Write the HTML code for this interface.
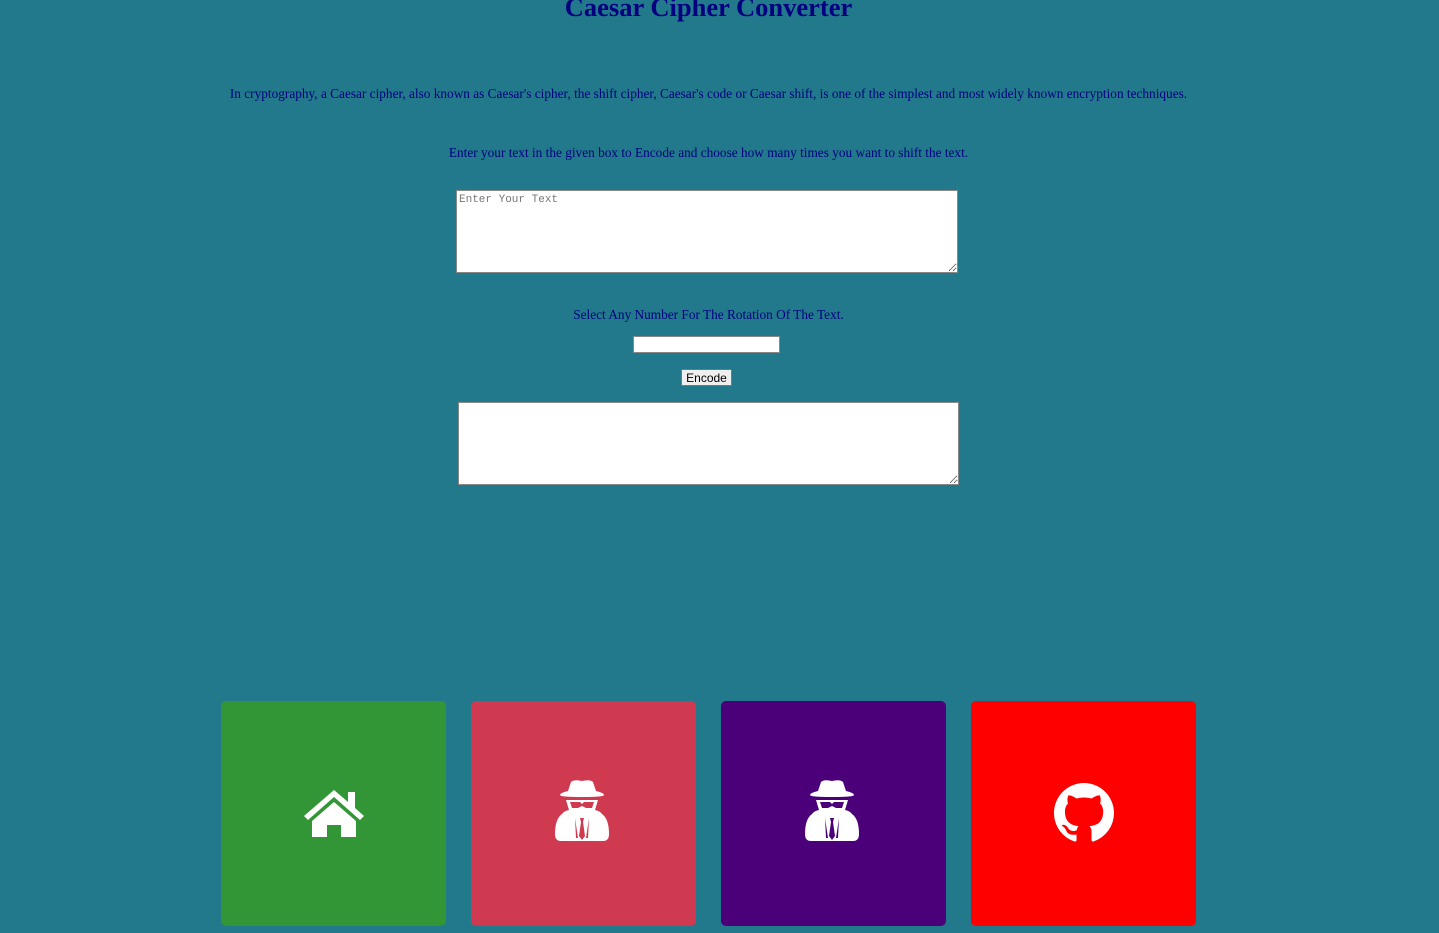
<!DOCTYPE html>
<html><head><style>
body{margin:0;background:#22798b;font-family:"Liberation Serif",serif;color:#000080;width:1439px;height:933px;overflow:hidden;position:relative}
h1{position:absolute;top:-8px;left:0;width:1417px;text-align:center;font-size:26.5px;margin:0;font-weight:bold}
.p{position:absolute;left:0;width:1417px;text-align:center;font-size:13.3px}
textarea{position:absolute;border:1px solid #888;background:#fff;resize:both;font-family:"Liberation Mono",monospace;font-size:11px;padding:3px 2px;box-sizing:border-box;margin:0}
textarea::placeholder{color:#777}
.c{position:absolute;top:701px;width:225px;height:225px;border-radius:5px;display:flex;align-items:center;justify-content:center}
</style></head><body>
<h1>Caesar Cipher Converter</h1>
<div class="p" style="top:86px">In cryptography, a Caesar cipher, also known as Caesar's cipher, the shift cipher, Caesar's code or Caesar shift, is one of the simplest and most widely known encryption techniques.</div>
<div class="p" style="top:145px">Enter your text in the given box to Encode and choose how many times you want to shift the text.</div>
<textarea style="left:456px;top:190px;width:502px;height:83px" placeholder="Enter Your Text"></textarea>
<div class="p" style="top:307px">Select Any Number For The Rotation Of The Text.</div>
<input style="position:absolute;left:633px;top:336px;width:147px;height:17px;box-sizing:border-box;border:1px solid #888;background:#fff;margin:0">
<button style="position:absolute;left:681px;top:369px;width:51px;height:17px;font:12px 'Liberation Sans',sans-serif;padding:0;border:1px solid #777;background:#efefef;margin:0">Encode</button>
<textarea style="left:458px;top:402px;width:501px;height:83px"></textarea>
<div class="c" style="left:221px;background:#329636"><svg width="62" height="50" viewBox="0 0 62 50" style="margin-top:-2px"><path d="M31 2L1 28l4 4 26-23 26 23 4-4-9-8V4h-7v10z" fill="#fff"/><path d="M31 14L9 33v16h15V37h14v12h15V33z" fill="#fff"/></svg></div>
<div class="c" style="left:471px;background:#d03a50"><svg width="54" height="64" viewBox="0 0 54 64" style="margin-left:-4px;margin-top:-8px"><g fill="#fff"><path d="M16 4q3-3 11-1q8-2 11 1l3 9q8 2 8 4q0 2-22 2q-22 0-22-2q0-2 8-4z"/><path d="M11 22h32l-3 10q5 1 7 4q7 5 7 20q0 7-6 7H6q-6 0-6-7q0-15 7-20q2-3 7-4z"/></g><g fill="#d03a50"><path d="M15 24h10l2 2 2-2h10l-2 6h-6l-4-2-4 2h-6z"/><path d="M20 40l3 20h-2zM34 40l-3 20h2z"/><path d="M25 40h4l-1 4 2 14-3 4-3-4 2-14z"/></g></svg></div>
<div class="c" style="left:721px;background:#4b0079"><svg width="54" height="64" viewBox="0 0 54 64" style="margin-left:-4px;margin-top:-8px"><g fill="#fff"><path d="M16 4q3-3 11-1q8-2 11 1l3 9q8 2 8 4q0 2-22 2q-22 0-22-2q0-2 8-4z"/><path d="M11 22h32l-3 10q5 1 7 4q7 5 7 20q0 7-6 7H6q-6 0-6-7q0-15 7-20q2-3 7-4z"/></g><g fill="#4b0079"><path d="M15 24h10l2 2 2-2h10l-2 6h-6l-4-2-4 2h-6z"/><path d="M20 40l3 20h-2zM34 40l-3 20h2z"/><path d="M25 40h4l-1 4 2 14-3 4-3-4 2-14z"/></g></svg></div>
<div class="c" style="left:971px;background:#ff0000"><svg width="60" height="60" viewBox="0 0 16 16" style="margin-top:-2px"><path fill="#fff" d="M8 0C3.58 0 0 3.58 0 8c0 3.54 2.290 6.53 5.47 7.590.4.07.55-.17.55-.38 0-.19-.01-.82-.01-1.49-2.01.37-2.53-.49-2.690-.94-.09-.23-.48-.94-.82-1.130-.28-.15-.68-.52-.01-.53.63-.01 1.08.58 1.23.82.72 1.21 1.87.87 2.33.66.07-.52.28-.87.51-1.07-1.78-.2-3.64-.89-3.64-3.950 0-.87.31-1.59.82-2.15-.08-.2-.36-1.02.08-2.12 0 0 .67-.21 2.2.82.64-.18 1.32-.27 2-.27.68 0 1.36.09 2 .27 1.53-1.04 2.2-.82 2.2-.82.44 1.1.16 1.92.08 2.12.51.56.82 1.27.82 2.15 0 3.07-1.87 3.75-3.65 3.95.29.25.54.73.54 1.48 0 1.07-.01 1.93-.01 2.2 0 .21.15.46.55.38A8.013 8.013 0 0016 8c0-4.42-3.58-8-8-8z"/></svg></div>
</body></html>
